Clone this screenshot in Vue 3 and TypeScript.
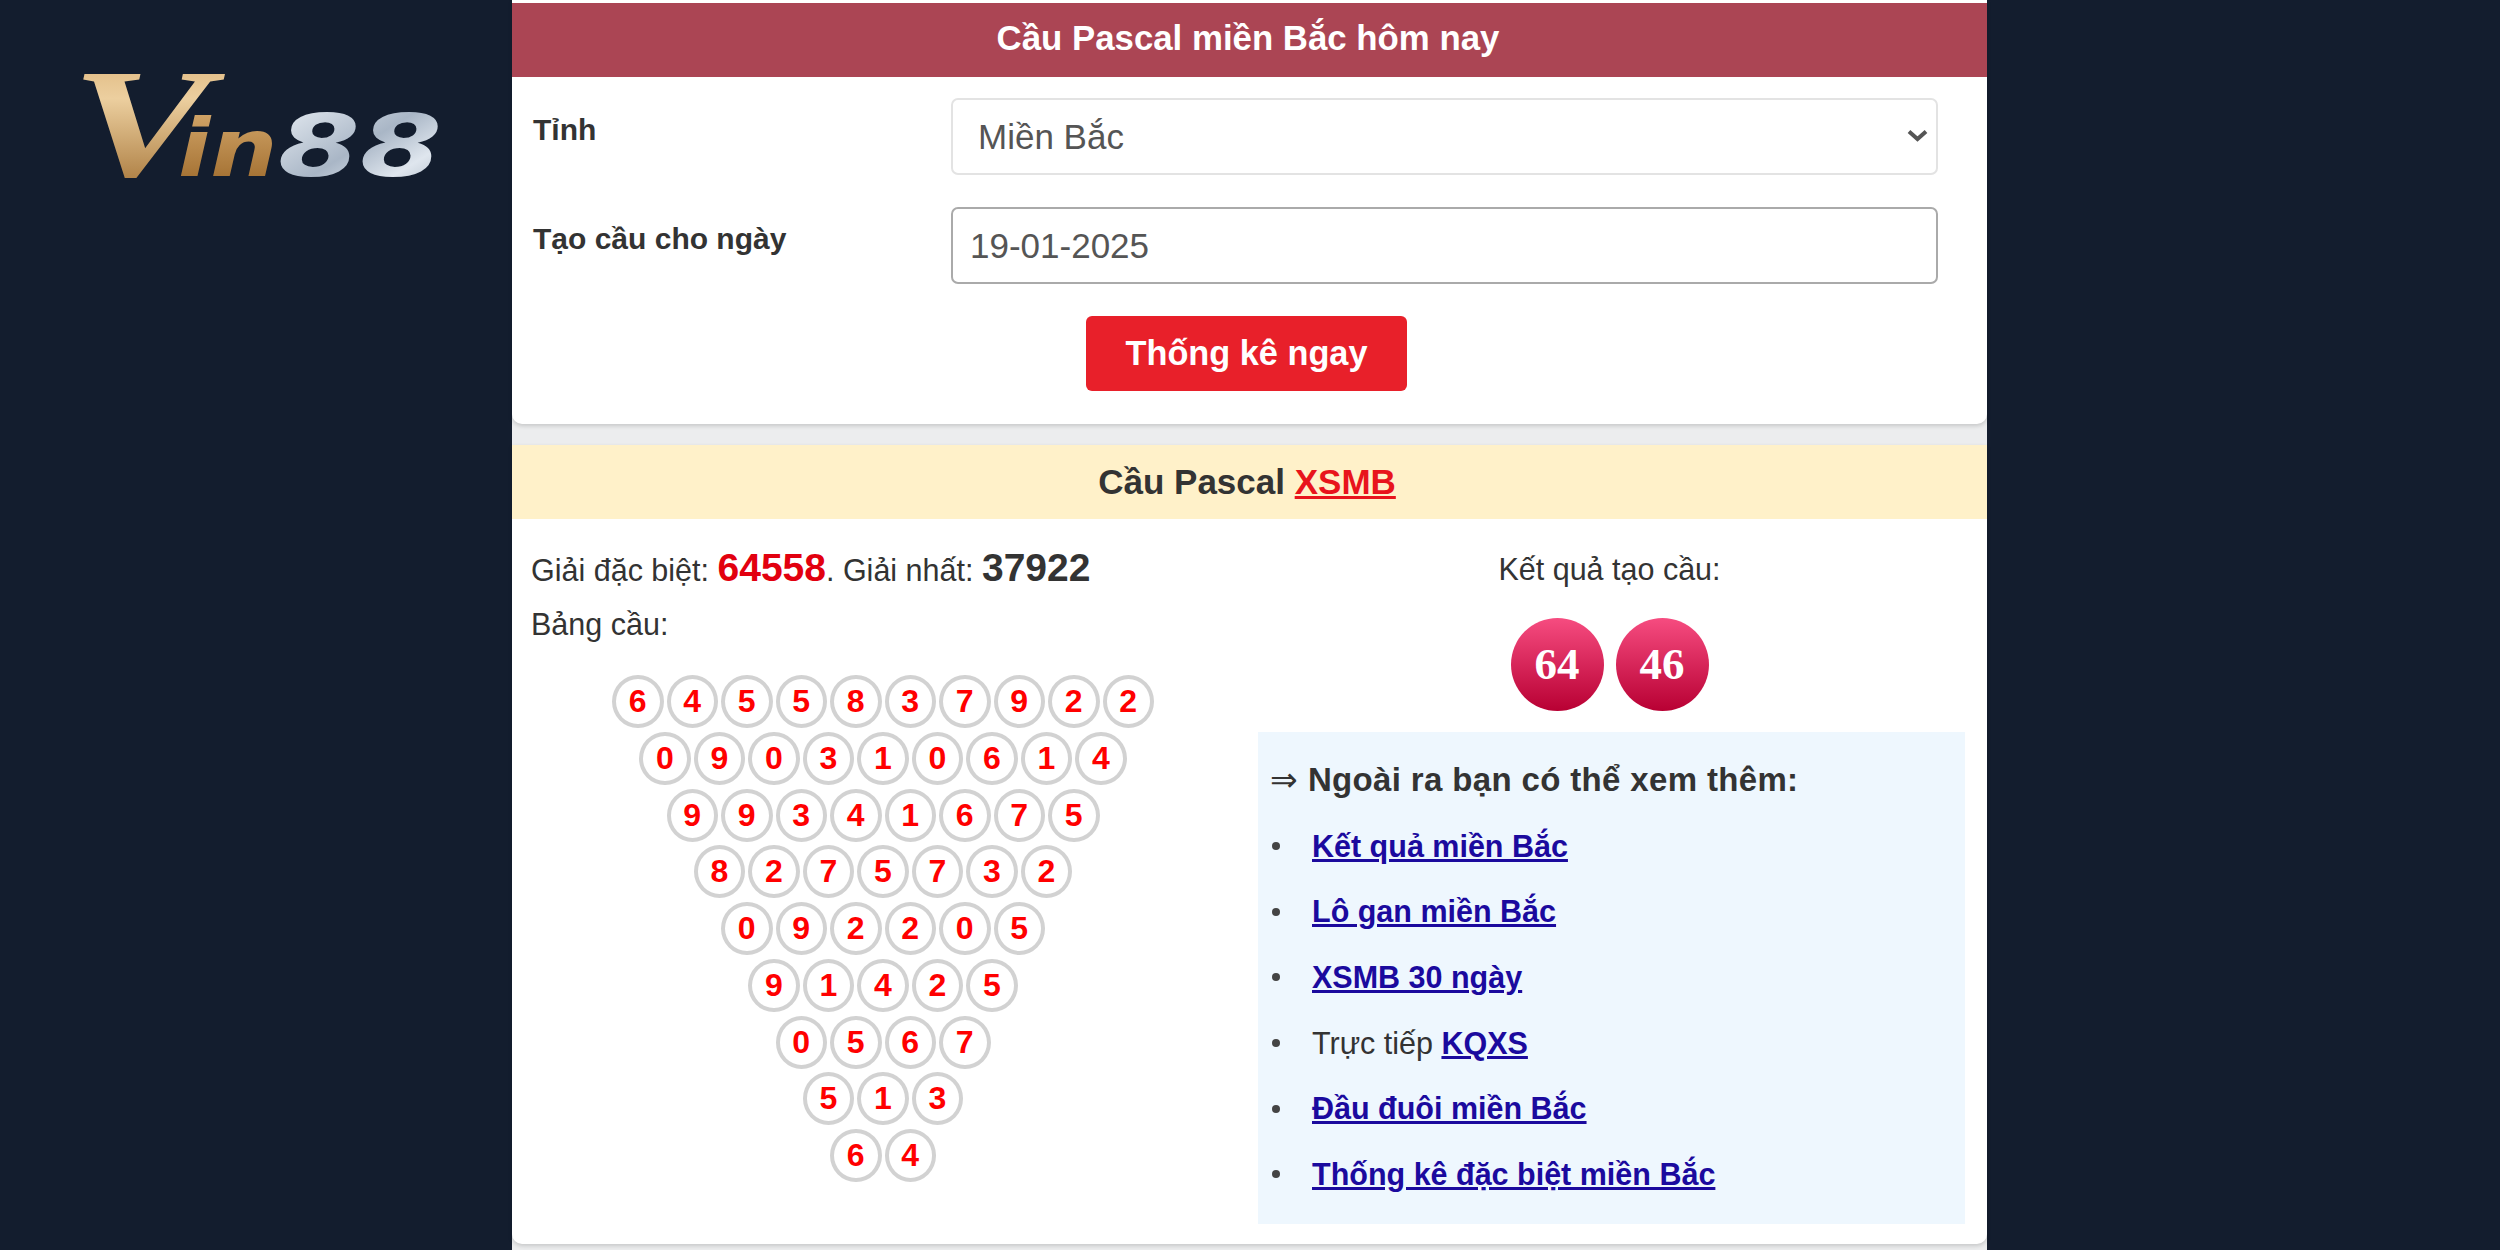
<script setup lang="ts">
const rows: string[] = [
  '6455837922',
  '090310614',
  '99341675',
  '8275732',
  '092205',
  '91425',
  '0567',
  '513',
  '64',
]

const links = [
  { before: '', text: 'Kết quả miền Bắc' },
  { before: '', text: 'Lô gan miền Bắc' },
  { before: '', text: 'XSMB 30 ngày' },
  { before: 'Trực tiếp ', text: 'KQXS' },
  { before: '', text: 'Đầu đuôi miền Bắc' },
  { before: '', text: 'Thống kê đặc biệt miền Bắc' },
]
</script>

<template>
  <div class="page">
    <aside class="side">
      <svg class="logo" viewBox="0 0 353 102" width="353" height="102">
        <defs>
          <linearGradient id="gold" x1="0" y1="0" x2="0" y2="1">
            <stop offset="0" stop-color="#d9ae72" />
            <stop offset="0.35" stop-color="#eccf9f" />
            <stop offset="1" stop-color="#9a6627" />
          </linearGradient>
          <linearGradient id="goldLow" x1="0" y1="0" x2="0" y2="1">
            <stop offset="0" stop-color="#d8ac70" />
            <stop offset="1" stop-color="#9a6627" />
          </linearGradient>
          <linearGradient id="silver" x1="0" y1="0" x2="1" y2="1">
            <stop offset="0" stop-color="#eef3f8" />
            <stop offset="0.5" stop-color="#a9b6c6" />
            <stop offset="0.75" stop-color="#dfe6ee" />
            <stop offset="1" stop-color="#aab5c2" />
          </linearGradient>
        </defs>
        <text class="logo-v" transform="translate(-14 102) scale(1.36 1)" fill="url(#gold)">V</text>
        <text class="logo-in" transform="translate(93 102) scale(1.18 1)" fill="url(#goldLow)">in</text>
        <text class="logo-88" transform="translate(193 102) scale(1.37 1)" fill="url(#silver)">88</text>
      </svg>
    </aside>

    <main class="content">
      <section class="card form-card">
        <h2 class="card-title">Cầu Pascal miền Bắc hôm nay</h2>
        <div class="form">
          <div class="form-row">
            <label class="form-label">Tỉnh</label>
            <div class="fake-select">
              <span>Miền Bắc</span>
              <svg class="chevron" viewBox="0 0 21 13" width="21" height="13">
                <path d="M2 2.5 10.5 10 19 2.5" fill="none" stroke="#555" stroke-width="4" />
              </svg>
            </div>
          </div>
          <div class="form-row">
            <label class="form-label">Tạo cầu cho ngày</label>
            <input class="date-input" type="text" value="19-01-2025" />
          </div>
          <div class="actions">
            <button class="submit" type="button">Thống kê ngay</button>
          </div>
        </div>
      </section>

      <section class="card result-card">
        <h3 class="result-title">Cầu Pascal <a class="xsmb">XSMB</a></h3>
        <div class="result-body">
          <div class="left-col">
            <p class="prize">
              Giải đặc biệt: <b class="num red">64558</b>. Giải nhất: <b class="num">37922</b>
            </p>
            <p class="table-label">Bảng cầu:</p>
            <div class="triangle">
              <div v-for="(row, i) in rows" :key="i" class="tri-row">
                <span v-for="(d, j) in row.split('')" :key="j" class="bubble">{{ d }}</span>
              </div>
            </div>
          </div>
          <div class="right-col">
            <p class="res-label">Kết quả tạo cầu:</p>
            <div class="balls">
              <span class="ball">64</span>
              <span class="ball">46</span>
            </div>
            <div class="more">
              <p class="more-title"><span class="arrow">⇒</span> Ngoài ra bạn có thể xem thêm:</p>
              <ul class="more-list">
                <li v-for="l in links" :key="l.text">
                  <span>{{ l.before }}<a class="more-link">{{ l.text }}</a></span>
                </li>
              </ul>
            </div>
          </div>
        </div>
      </section>
    </main>
  </div>
</template>

<style>
html,
body {
  margin: 0;
  background: #131d2e;
}
</style>

<style scoped>
.page {
  display: flex;
  height: 1250px;
  overflow: hidden;
  font-family: "Liberation Sans", Arial, sans-serif;
  color: #333;
  background: #131d2e;
}

.side {
  width: 512px;
  flex: none;
  box-sizing: border-box;
  padding: 74px 0 0 85px;
}

.logo {
  display: block;
  overflow: visible;
}

.logo-v {
  font: italic 700 154px "Liberation Serif", serif;
}

.logo-in {
  font: italic 700 80px "DejaVu Sans", sans-serif;
}

.logo-88 {
  font: italic 700 86px "DejaVu Sans", sans-serif;
}

.content {
  width: 1475px;
  flex: none;
  height: 1250px;
  background: #ecedee;
  display: flex;
  flex-direction: column;
  gap: 21px;
}

.card {
  background: #fff;
  border-radius: 0 0 10px 10px;
  box-shadow: 0 2px 4px rgba(0, 0, 0, 0.16);
}

.form-card {
  height: 424px;
  box-sizing: border-box;
  padding-top: 3px;
}

.card-title {
  margin: 0;
  height: 74px;
  padding-right: 3px;
  line-height: 70px;
  text-align: center;
  background: #ab4554;
  color: #fff;
  font-size: 34.8px;
  font-weight: 700;
}

.form {
  padding: 21px 49px 0 21px;
}

.form-row {
  display: flex;
  align-items: flex-start;
  height: 109px;
}

.form-label {
  width: 418px;
  flex: none;
  font-size: 30px;
  font-weight: 700;
  line-height: 64px;
}

.fake-select,
.date-input {
  box-sizing: border-box;
  width: 987px;
  height: 77px;
  font-family: inherit;
  font-size: 35px;
  color: #555;
  background: #fff;
  border-radius: 7px;
}

.fake-select {
  display: flex;
  align-items: center;
  justify-content: space-between;
  padding: 0 8px 0 25px;
  border: 2px solid #e3e3e3;
}

.chevron {
  display: block;
  margin-top: -2px;
}

.date-input {
  padding: 0 17px;
  border: 2px solid #aaa;
  outline: none;
}

.actions {
  display: flex;
  justify-content: center;
  padding-left: 22px;
}

.submit {
  width: 321px;
  height: 75px;
  border: 0;
  border-radius: 6px;
  background: #e8202a;
  color: #fff;
  font-family: inherit;
  font-size: 34.3px;
  font-weight: 700;
}

.result-card {
  flex: 1;
  margin-bottom: 6px;
}

.result-title {
  margin: 0;
  height: 74px;
  padding-right: 5px;
  line-height: 74px;
  text-align: center;
  background: #fff1c9;
  font-size: 35px;
  font-weight: 700;
}

.xsmb {
  color: #e8141c;
  text-decoration: underline;
}

.result-body {
  display: flex;
  justify-content: space-between;
}

.left-col {
  width: 742px;
  flex: none;
  box-sizing: border-box;
  padding-top: 25px;
  padding-left: 19px;
}

.prize {
  margin: 0;
  font-size: 30.5px;
  line-height: 48px;
}

.num {
  font-size: 39px;
}

.red {
  color: #e2000f;
}

.table-label {
  margin: 8px 0 0;
  font-size: 30.5px;
  line-height: 44px;
}

.triangle {
  margin-top: 29px;
  margin-left: -19px;
  display: flex;
  flex-direction: column;
  align-items: center;
}

.tri-row {
  display: flex;
  height: 56.75px;
}

.bubble {
  box-sizing: border-box;
  width: 51.5px;
  height: 53px;
  margin: 0 1.5px;
  border: 4px solid #d2d2d2;
  border-radius: 50%;
  color: #f00;
  font-size: 32px;
  font-weight: 700;
  line-height: 44px;
  text-align: center;
}

.right-col {
  width: 707px;
  flex: none;
  margin-right: 22px;
  box-sizing: border-box;
}

.res-label {
  margin: 29px 0 0;
  text-align: center;
  font-size: 30.5px;
  line-height: 42px;
  padding-right: 4px;
}

.balls {
  display: flex;
  justify-content: center;
  gap: 12px;
  margin-top: 28px;
  padding-right: 4px;
}

.ball {
  width: 93px;
  height: 93px;
  border-radius: 50%;
  background: linear-gradient(#f64c80, #b80033);
  color: #fff;
  font-family: "Liberation Serif", serif;
  font-size: 45px;
  font-weight: 700;
  line-height: 93px;
  text-align: center;
}

.more {
  margin-top: 21px;
  height: 492px;
  box-sizing: border-box;
  background: #eef7fe;
  padding: 28px 12px 0;
}

.more-title {
  margin: 0;
  font-size: 33px;
  font-weight: 700;
  line-height: 40px;
  letter-spacing: 0.35px;
}

.arrow {
  font-weight: 400;
}

.more-list {
  margin: 13.5px 0 0;
  padding: 0;
  list-style: none;
}

.more-list li {
  display: flex;
  align-items: center;
  height: 65.6px;
  font-size: 30.5px;
}

.more-list li::before {
  content: "";
  flex: none;
  width: 8px;
  height: 8px;
  margin: 0 32px 0 2px;
  border-radius: 50%;
  background: #444;
}

.more-link {
  color: #1b0a9e;
  font-weight: 700;
  text-decoration: underline;
}
</style>
